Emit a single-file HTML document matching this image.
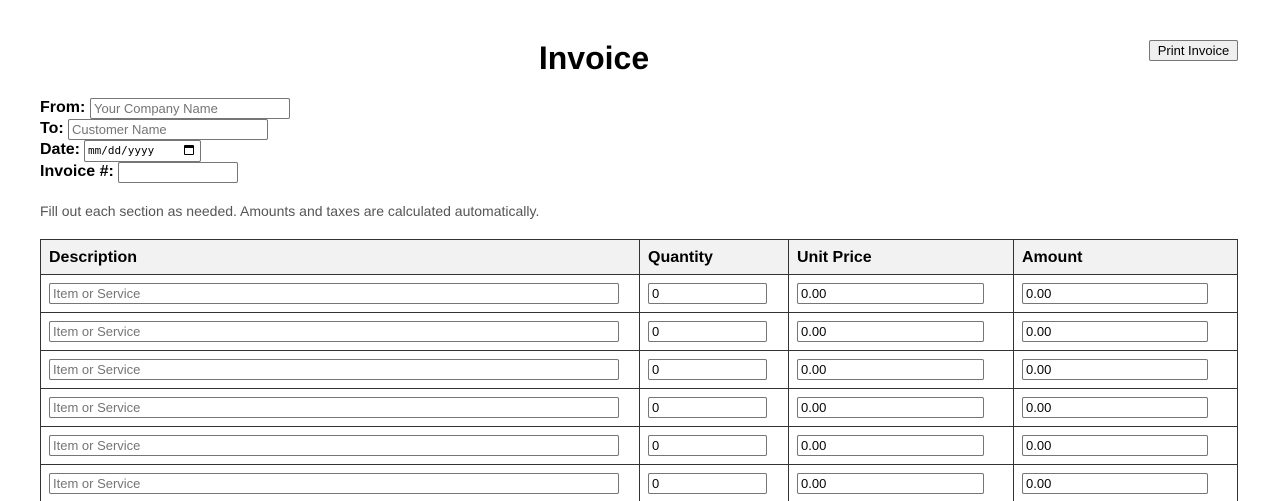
<!DOCTYPE html>
<html><head><style>
body{margin:0;width:1278px;height:501px;overflow:hidden;background:#fff;font-family:"Liberation Sans",Arial,sans-serif;position:relative}
.a{position:absolute}
.in{position:absolute;box-sizing:border-box;border:1px solid #767676;border-radius:2px;background:#fff;font-size:13px;line-height:19px;padding-left:3px;color:#000;white-space:nowrap;overflow:hidden}
.ph{color:#757575}
.lb{position:absolute;font-weight:bold;font-size:16px}
.v{position:absolute;top:239px;width:1px;height:262px;background:#333}
.h{position:absolute;left:40px;width:1198px;height:1px;background:#333}
.th{position:absolute;top:249px;font-weight:bold;font-size:16px}
</style></head><body>
<div class="a" style="left:0;width:1188px;text-align:center;top:40px;font-size:32px;font-weight:bold">Invoice</div>
<div class="a" style="left:1149px;top:40px;width:89px;height:21px;box-sizing:border-box;border:1px solid #767676;border-radius:2px;background:#efefef;font-size:13px;text-align:center;line-height:19px">Print Invoice</div>
<div class="lb" style="left:40px;top:99px">From:</div>
<div class="in ph" style="left:90px;top:98px;width:200px;height:21px">Your Company Name</div>
<div class="lb" style="left:40px;top:120px">To:</div>
<div class="in ph" style="left:68px;top:119px;width:200px;height:21px">Customer Name</div>
<div class="lb" style="left:40px;top:141px">Date:</div>
<div class="in" style="left:84px;top:140px;width:117px;height:22px;font-family:'DejaVu Sans Mono',monospace;font-size:11px;line-height:20px">mm/dd/yyyy <span style="position:absolute;left:99px;top:4px;width:10px;height:10px;border:1.5px solid #000;border-top-width:3px;box-sizing:border-box;border-radius:1px"></span></div>
<div class="lb" style="left:40px;top:163px">Invoice #:</div>
<div class="in" style="left:118px;top:162px;width:120px;height:21px"></div>
<div class="a" style="left:40px;top:203px;font-size:14px;color:#555">Fill out each section as needed. Amounts and taxes are calculated automatically.</div>
<div class="a" style="left:40px;top:239px;width:1198px;height:35px;background:#f2f2f2"></div>
<div class="h" style="top:239px"></div>
<div class="h" style="top:274px"></div>
<div class="h" style="top:312px"></div>
<div class="h" style="top:350px"></div>
<div class="h" style="top:388px"></div>
<div class="h" style="top:426px"></div>
<div class="h" style="top:464px"></div>
<div class="v" style="left:40px"></div>
<div class="v" style="left:639px"></div>
<div class="v" style="left:788px"></div>
<div class="v" style="left:1013px"></div>
<div class="v" style="left:1237px"></div>
<div class="th" style="left:49px">Description</div>
<div class="th" style="left:648px">Quantity</div>
<div class="th" style="left:797px">Unit Price</div>
<div class="th" style="left:1022px">Amount</div>
<div class="in ph" style="left:49px;top:283px;width:570px;height:21px">Item or Service</div><div class="in" style="left:648px;top:283px;width:119px;height:21px">0</div><div class="in" style="left:797px;top:283px;width:187px;height:21px">0.00</div><div class="in" style="left:1022px;top:283px;width:186px;height:21px">0.00</div>
<div class="in ph" style="left:49px;top:321px;width:570px;height:21px">Item or Service</div><div class="in" style="left:648px;top:321px;width:119px;height:21px">0</div><div class="in" style="left:797px;top:321px;width:187px;height:21px">0.00</div><div class="in" style="left:1022px;top:321px;width:186px;height:21px">0.00</div>
<div class="in ph" style="left:49px;top:359px;width:570px;height:21px">Item or Service</div><div class="in" style="left:648px;top:359px;width:119px;height:21px">0</div><div class="in" style="left:797px;top:359px;width:187px;height:21px">0.00</div><div class="in" style="left:1022px;top:359px;width:186px;height:21px">0.00</div>
<div class="in ph" style="left:49px;top:397px;width:570px;height:21px">Item or Service</div><div class="in" style="left:648px;top:397px;width:119px;height:21px">0</div><div class="in" style="left:797px;top:397px;width:187px;height:21px">0.00</div><div class="in" style="left:1022px;top:397px;width:186px;height:21px">0.00</div>
<div class="in ph" style="left:49px;top:435px;width:570px;height:21px">Item or Service</div><div class="in" style="left:648px;top:435px;width:119px;height:21px">0</div><div class="in" style="left:797px;top:435px;width:187px;height:21px">0.00</div><div class="in" style="left:1022px;top:435px;width:186px;height:21px">0.00</div>
<div class="in ph" style="left:49px;top:473px;width:570px;height:21px">Item or Service</div><div class="in" style="left:648px;top:473px;width:119px;height:21px">0</div><div class="in" style="left:797px;top:473px;width:187px;height:21px">0.00</div><div class="in" style="left:1022px;top:473px;width:186px;height:21px">0.00</div>
</body></html>
